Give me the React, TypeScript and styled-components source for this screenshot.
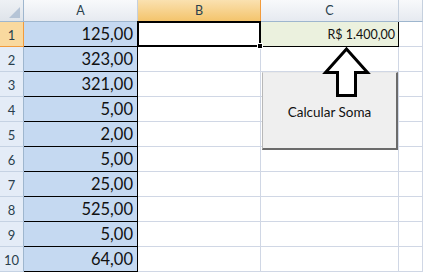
import React from "react";
import styled, { createGlobalStyle, css } from "styled-components";

const Global = createGlobalStyle`
  html, body { margin: 0; padding: 0; background: #fff; }
  body { font-family: Lato, "Noto Sans", sans-serif; overflow: hidden; }
`;

const Sheet = styled.div`
  position: relative;
  width: 423px;
  height: 272px;
  overflow: hidden;
`;

const Grid = styled.div`
  display: grid;
  grid-template-columns: 24px 114px 123px 138px 1fr;
  grid-template-rows: 22px repeat(10, 25px);
`;

const Corner = styled.div`
  position: relative;
  background: linear-gradient(#eef1f5, #dfe4ea);
  border-right: 1px solid #9eb6ce;
  border-bottom: 1px solid #9eb6ce;
  &::after {
    content: "";
    position: absolute;
    right: 3px;
    bottom: 3px;
    width: 0;
    height: 0;
    border-left: 11px solid transparent;
    border-bottom: 11px solid #b5c4d6;
  }
`;

const ColHead = styled.div<{ $active?: boolean }>`
  display: flex;
  align-items: center;
  justify-content: center;
  font-size: 12.5px;
  color: #2a3f4d;
  background: linear-gradient(#f8f9fb, #e6eaf0);
  border-right: 1px solid #c5d0de;
  border-bottom: 1px solid #9eb6ce;
  ${(p) =>
    p.$active &&
    css`
      background: linear-gradient(#fae1b0, #f4c46c);
      border-right-color: #f29b3c;
      border-bottom-color: #f29b3c;
    `}
`;

const RowHead = styled.div<{ $active?: boolean }>`
  display: flex;
  align-items: center;
  justify-content: center;
  padding-top: 2px;
  font-size: 13px;
  color: #2a3f4d;
  background: #e4ecf7;
  border-right: 1px solid #9eb6ce;
  border-bottom: 1px solid #c5d2e3;
  ${(p) =>
    p.$active &&
    css`
      background: #f9d99f;
      border-right-color: #f29b3c;
      border-bottom-color: #f29b3c;
    `}
`;

const Cell = styled.div`
  display: flex;
  align-items: flex-end;
  justify-content: flex-end;
  border-right: 1px solid #d0d7e5;
  border-bottom: 1px solid #d0d7e5;
`;

const ValueCell = styled(Cell)`
  background: #c5d9f1;
  border-right-color: #000;
  border-bottom-color: #000;
  padding: 0 4px 4px 0;
  font-size: 16.5px;
  line-height: 1;
  color: #111;
`;

const SelectedCell = styled(Cell)`
  position: relative;
  &::before {
    content: "";
    position: absolute;
    left: -1px;
    top: -1px;
    right: -1px;
    bottom: -1px;
    border: 2px solid #000;
  }
  &::after {
    content: "";
    position: absolute;
    right: -3px;
    bottom: -3px;
    width: 4px;
    height: 4px;
    background: #000;
    border: 1px solid #fff;
  }
`;

const TotalCell = styled(Cell)`
  background: #ebf1de;
  border-right-color: #000;
  border-bottom-color: #000;
  padding: 0 3px 5px 0;
  font-size: 12.5px;
  line-height: 1;
  color: #111;
`;

const Button = styled.div`
  position: absolute;
  left: 262px;
  top: 72px;
  width: 133px;
  height: 73px;
  box-sizing: content-box;
  background: #efefef;
  border-left: 1px solid #b8b8b8;
  border-top: 1px solid #e8e8e8;
  border-right: 2px solid #6b6b6b;
  border-bottom: 2px solid #6b6b6b;
  display: flex;
  align-items: center;
  justify-content: center;
  padding-top: 2px;
  font-size: 13.5px;
  color: #111;
`;

const Arrow = styled.svg`
  position: absolute;
  left: 0;
  top: 0;
  pointer-events: none;
`;

const values = [
  "125,00",
  "323,00",
  "321,00",
  "5,00",
  "2,00",
  "5,00",
  "25,00",
  "525,00",
  "5,00",
  "64,00",
];

export default function App() {
  return (
    <Sheet>
      <Global />
      <Grid>
        <Corner />
        <ColHead>A</ColHead>
        <ColHead $active>B</ColHead>
        <ColHead>C</ColHead>
        <ColHead />
        {values.map((v, i) => (
          <React.Fragment key={i}>
            <RowHead $active={i === 0}>{i + 1}</RowHead>
            <ValueCell>{v}</ValueCell>
            {i === 0 ? <SelectedCell /> : <Cell />}
            {i === 0 ? <TotalCell>R$ 1.400,00</TotalCell> : <Cell />}
            <Cell />
          </React.Fragment>
        ))}
      </Grid>
      <Button>Calcular Soma</Button>
      <Arrow width="423" height="272" viewBox="0 0 423 272">
        <path
          d="M346.5 49 L325.5 72.5 L337.5 72.5 L337.5 95.5 L355.5 95.5 L355.5 72.5 L367.5 72.5 Z"
          fill="#fff"
          stroke="#000"
          strokeWidth="3"
          strokeLinejoin="miter"
        />
      </Arrow>
    </Sheet>
  );
}
